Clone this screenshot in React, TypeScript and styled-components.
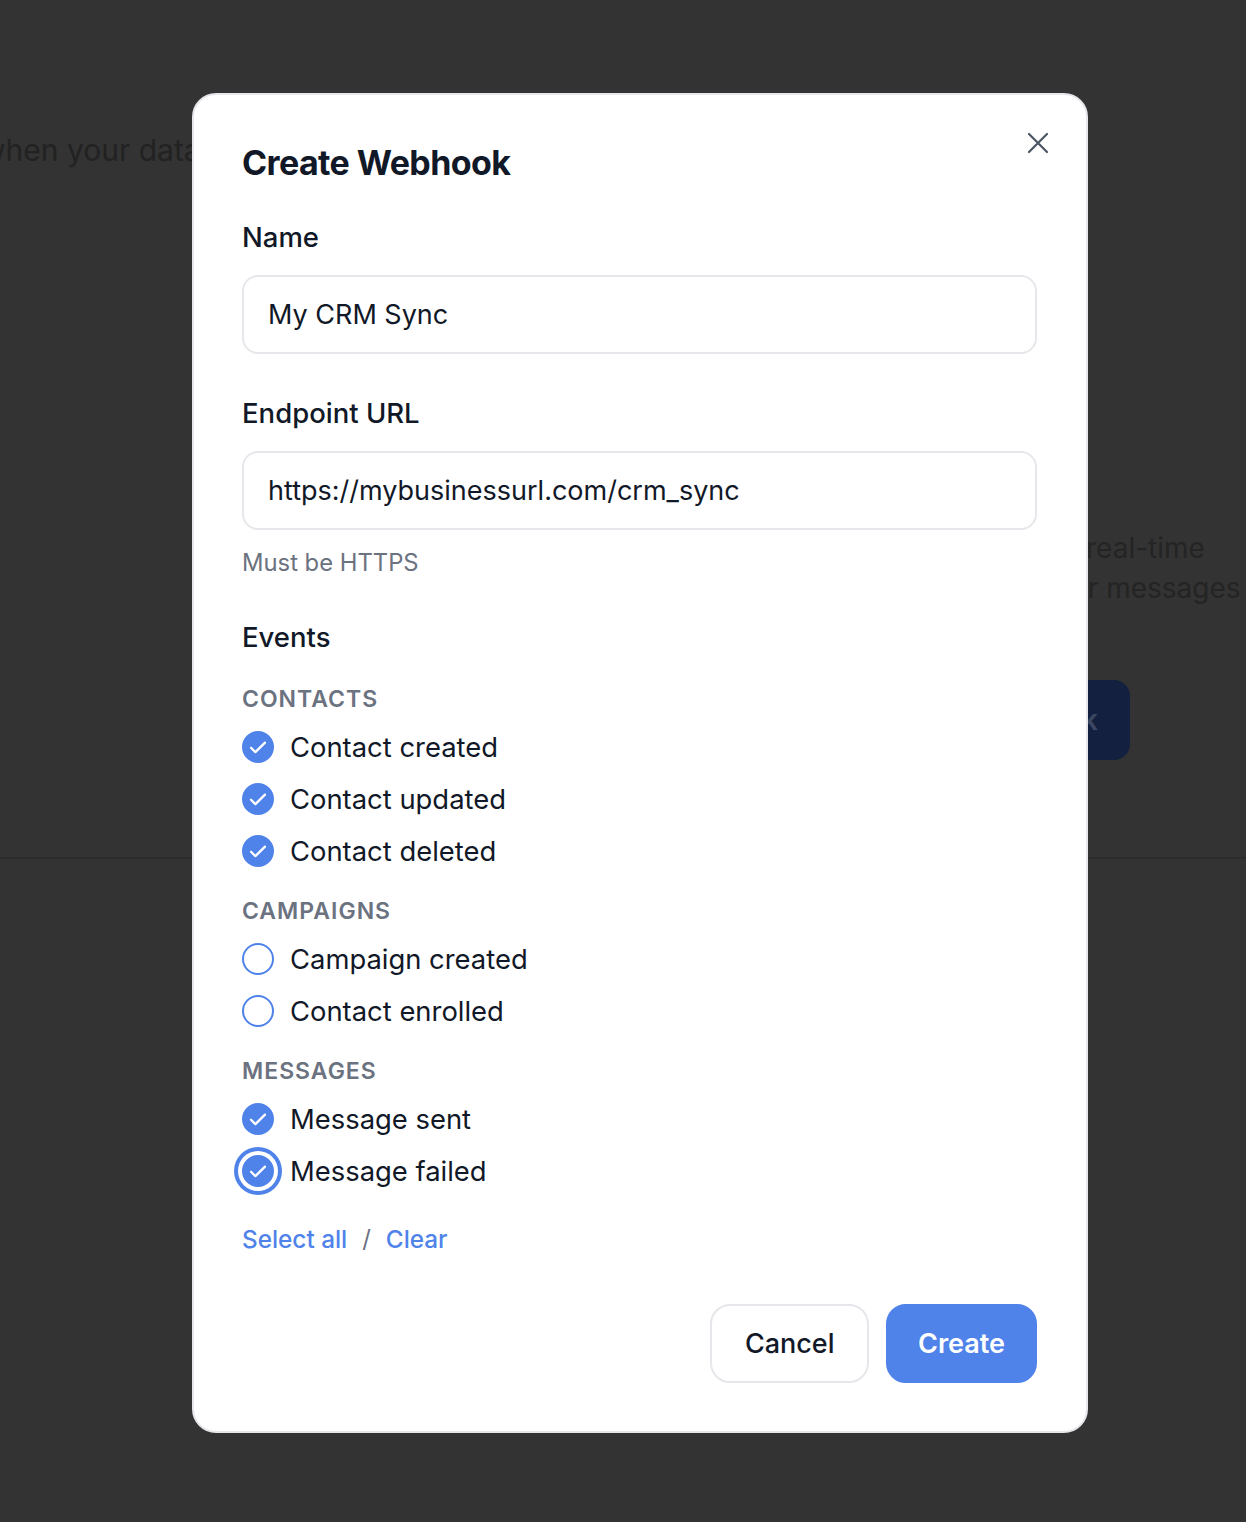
import React from "react";
import styled, { createGlobalStyle } from "styled-components";

const GlobalStyle = createGlobalStyle`
  html, body {
    margin: 0;
    padding: 0;
    background: #333333;
    font-family: Inter, "Noto Sans", "Liberation Sans", sans-serif;
  }
  * {
    box-sizing: border-box;
  }
`;

const BLUE = "#4f83ea";

const Page = styled.div`
  min-height: 100vh;
  background: #333333;
  padding-top: 130px;
  overflow: hidden;
`;

const Intro = styled.div`
  margin-left: -19px;
  font-size: 30px;
  line-height: 40px;
  color: #222222;
  white-space: nowrap;
`;

const Aside = styled.div`
  margin: 358px 0 0 1086px;
  display: flex;
  flex-direction: column;
`;

const AsideLine = styled.div<{ $shift?: number }>`
  margin-left: ${(p) => p.$shift || 0}px;
  font-size: 28px;
  line-height: 40px;
  color: #242424;
  white-space: nowrap;
`;

const GhostButton = styled.div`
  margin: 72px 0 0 -200px;
  width: 244px;
  height: 80px;
  border-radius: 16px;
  background: #13203f;
  color: #3c4762;
  font-size: 28px;
  font-weight: 600;
  display: flex;
  align-items: center;
  justify-content: flex-end;
  padding-right: 32px;
  white-space: nowrap;
`;

const Divider = styled.div`
  margin-top: 97px;
  height: 2px;
  background: #2c2c2c;
`;

const Overlay = styled.div`
  position: fixed;
  inset: 0;
  padding: 93px 0 0 192px;
`;

const Modal = styled.div`
  position: relative;
  width: 896px;
  background: #ffffff;
  border: 2px solid #e5e7eb;
  border-radius: 24px;
  padding: 48px 49px 48px 48px;
  display: flex;
  flex-direction: column;
`;

const Title = styled.h2`
  margin: 0;
  font-size: 34px;
  line-height: 40px;
  font-weight: 700;
  letter-spacing: -0.6px;
  color: #111827;
`;

const CloseButton = styled.button`
  position: absolute;
  top: 32px;
  right: 32px;
  width: 32px;
  height: 32px;
  padding: 0;
  border: none;
  background: transparent;
  display: flex;
  align-items: center;
  justify-content: center;
  cursor: pointer;
`;

const Label = styled.div<{ $top: number }>`
  margin-top: ${(p) => p.$top}px;
  font-size: 27.5px;
  line-height: 32px;
  font-weight: 500;
  color: #111827;
`;

const Input = styled.input`
  margin-top: 22px;
  width: 100%;
  height: 79px;
  padding: 0 24px;
  border: 2px solid #e5e7eb;
  border-radius: 16px;
  font-family: inherit;
  font-size: 27px;
  color: #111827;
  outline: none;
`;

const Hint = styled.div`
  margin-top: 18px;
  font-size: 23.8px;
  line-height: 30px;
  color: #6b7280;
`;

const Group = styled.div<{ $top: number }>`
  margin-top: ${(p) => p.$top}px;
  font-size: 23px;
  line-height: 30px;
  font-weight: 600;
  letter-spacing: 1px;
  color: #6b7280;
`;

const List = styled.div`
  margin-top: 7px;
  display: flex;
  flex-direction: column;
`;

const Row = styled.label`
  height: 52px;
  display: flex;
  align-items: center;
  gap: 16px;
  font-size: 27.4px;
  color: #111827;
  cursor: pointer;
`;

const Box = styled.span<{ $checked: boolean; $focus?: boolean }>`
  width: 32px;
  height: 32px;
  flex: none;
  border-radius: 50%;
  border: 2px solid ${BLUE};
  background: ${(p) => (p.$checked ? BLUE : "#ffffff")};
  display: flex;
  align-items: center;
  justify-content: center;
  box-shadow: ${(p) => (p.$focus ? `0 0 0 4px #ffffff, 0 0 0 8px ${BLUE}` : "none")};
`;

const Links = styled.div`
  margin-top: 27px;
  display: flex;
  align-items: center;
  gap: 15px;
  font-size: 24px;
  line-height: 30px;
`;

const LinkButton = styled.button`
  padding: 0;
  border: none;
  background: none;
  font-family: inherit;
  font-size: 24.3px;
  font-weight: 500;
  color: ${BLUE};
  cursor: pointer;
`;

const Slash = styled.span`
  color: #6b7280;
`;

const Footer = styled.div`
  margin-top: 50px;
  display: flex;
  justify-content: flex-end;
  gap: 17px;
`;

const Button = styled.button<{ $primary?: boolean }>`
  height: 79px;
  padding: 0 ${(p) => (p.$primary ? 30 : 32.5)}px;
  border-radius: 20px;
  border: 2px solid ${(p) => (p.$primary ? BLUE : "#e5e7eb")};
  background: ${(p) => (p.$primary ? BLUE : "#ffffff")};
  color: ${(p) => (p.$primary ? "#ffffff" : "#111827")};
  font-family: inherit;
  font-size: 27px;
  font-weight: ${(p) => (p.$primary ? 600 : 500)};
  cursor: pointer;
`;

const groups = [
  {
    title: "CONTACTS",
    top: 31,
    items: [
      { label: "Contact created", checked: true },
      { label: "Contact updated", checked: true },
      { label: "Contact deleted", checked: true },
    ],
  },
  {
    title: "CAMPAIGNS",
    top: 19,
    items: [
      { label: "Campaign created", checked: false },
      { label: "Contact enrolled", checked: false },
    ],
  },
  {
    title: "MESSAGES",
    top: 19,
    items: [
      { label: "Message sent", checked: true },
      { label: "Message failed", checked: true, focus: true },
    ],
  },
];

const Check = () => (
  <svg width="24" height="24" viewBox="0 0 24 24" fill="none">
    <path d="M5 12.8l4.4 4.3L19 7.6" stroke="#ffffff" strokeWidth="2.3" strokeLinecap="round" strokeLinejoin="round" />
  </svg>
);

const CloseIcon = () => (
  <svg width="24" height="24" viewBox="0 0 24 24" fill="none">
    <path d="M3 3l18 18M21 3L3 21" stroke="#4b5563" strokeWidth="2.2" strokeLinecap="round" />
  </svg>
);

const App = () => {
  return (
    <>
      <GlobalStyle />
      <Page>
        <Intro>when your data changes</Intro>
        <Aside>
          <AsideLine>real-time</AsideLine>
          <AsideLine $shift={-15}>or messages</AsideLine>
          <GhostButton>Add Webhook</GhostButton>
        </Aside>
        <Divider />
      </Page>
      <Overlay>
        <Modal>
          <CloseButton aria-label="Close">
            <CloseIcon />
          </CloseButton>
          <Title>Create Webhook</Title>
          <Label $top={38}>Name</Label>
          <Input defaultValue="My CRM Sync" />
          <Label $top={43}>Endpoint URL</Label>
          <Input defaultValue="https://mybusinessurl.com/crm_sync" />
          <Hint>Must be HTTPS</Hint>
          <Label $top={43}>Events</Label>
          {groups.map((g) => (
            <React.Fragment key={g.title}>
              <Group $top={g.top}>{g.title}</Group>
              <List>
                {g.items.map((it) => (
                  <Row key={it.label}>
                    <Box $checked={it.checked} $focus={"focus" in it && it.focus}>
                      {it.checked && <Check />}
                    </Box>
                    {it.label}
                  </Row>
                ))}
              </List>
            </React.Fragment>
          ))}
          <Links>
            <LinkButton>Select all</LinkButton>
            <Slash>/</Slash>
            <LinkButton>Clear</LinkButton>
          </Links>
          <Footer>
            <Button>Cancel</Button>
            <Button $primary>Create</Button>
          </Footer>
        </Modal>
      </Overlay>
    </>
  );
};

export default App;
